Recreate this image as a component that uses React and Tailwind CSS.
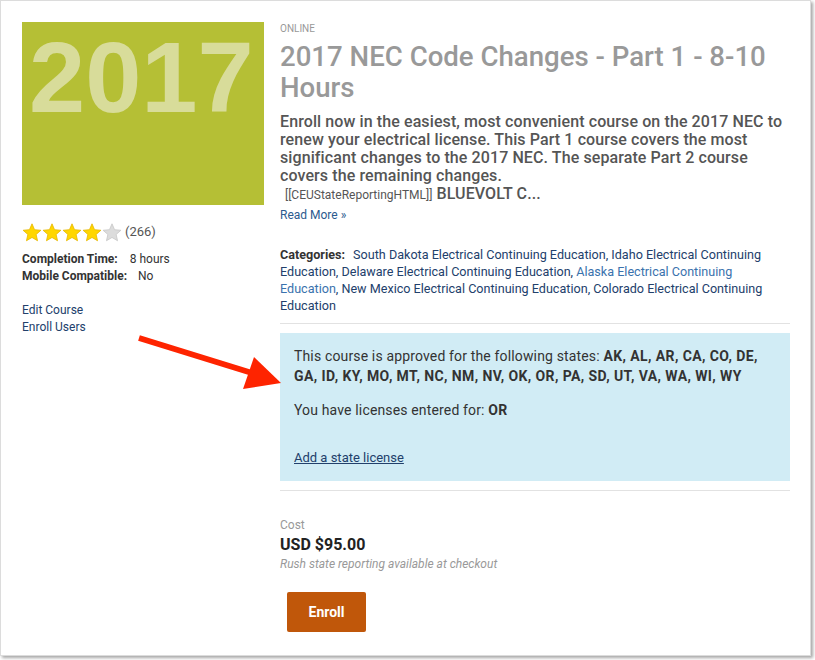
import React from "react";

function Star({ filled }) {
  return (
    <svg width="20" height="19" viewBox="0 0 24 23">
      <polygon
        points="12,1 15.1,8.1 22.8,8.8 17,13.9 18.7,21.5 12,17.5 5.3,21.5 7,13.9 1.2,8.8 8.9,8.1"
        fill={filled ? "#ffd600" : "#dcdcdc"}
        stroke={filled ? "#e8b900" : "#c8c8c8"}
        strokeWidth="1"
        strokeLinejoin="round"
      />
    </svg>
  );
}

export default function App() {
  return (
    <div className="relative w-[815px] h-[660px] bg-white" style={{ fontFamily: "Roboto, 'Liberation Sans', sans-serif" }}>
      <div className="w-[811px] h-[656px] bg-white border border-[#dcdcdc] shadow-[2px_2px_3px_rgba(0,0,0,0.35)] flex pl-[21px] pt-[21px] gap-4">
        {/* Left column */}
        <div className="w-[242px] flex flex-col">
          <div className="w-[242px] h-[183px] bg-[#b5bf35] pl-[7px] pt-[5px] overflow-hidden">
            <div className="text-[101px] leading-none font-bold text-[#d8dc9a]" style={{ fontFamily: "'Liberation Sans', Arial, sans-serif" }}>2017</div>
          </div>
          <div className="flex items-center mt-[17px] h-[20px]">
            <Star filled />
            <Star filled />
            <Star filled />
            <Star filled />
            <Star />
            <span className="ml-[3px] text-[13px] text-[#555]">(266)</span>
          </div>
          <div className="mt-[9px] text-[12px] leading-[17px] text-[#333]">
            <div><span className="font-bold">Completion Time:</span><span className="ml-[12px]">8 hours</span></div>
            <div><span className="font-bold">Mobile Compatible:</span><span className="ml-[11px]">No</span></div>
          </div>
          <div className="mt-[17px] text-[12px] leading-[17px] text-[#22406b]">
            <div>Edit Course</div>
            <div>Enroll Users</div>
          </div>
        </div>

        {/* Right column */}
        <div className="w-[510px] flex flex-col">
          <div className="text-[10px] leading-[14px] text-[#999] uppercase">Online</div>
          <h1 className="mt-[5px] text-[27.6px] leading-[31px] font-medium text-[#999]">2017 NEC Code Changes - Part 1 - 8-10 Hours</h1>
          <div className="mt-[10px] text-[16px] leading-[18px] font-medium text-[#555] tracking-[0.1px]">
            Enroll now in the easiest, most convenient course on the 2017 NEC to renew your electrical license. This Part 1 course covers the most significant changes to the 2017 NEC. The separate Part 2 course covers the remaining changes.
            <br />
            <span className="text-[12px] font-normal pl-[5px] tracking-normal">[[CEUStateReportingHTML]]</span> BLUEVOLT C...
          </div>
          <div className="mt-[3px] text-[12px] leading-[17px] text-[#2b5a8e]">Read More »</div>

          <div className="mt-[22px] text-[12.6px] leading-[17px] text-[#22406b]">
            <span className="font-bold text-[#333]">Categories:</span>
            <span className="ml-[8px]">South Dakota Electrical Continuing Education, Idaho Electrical Continuing Education, Delaware Electrical Continuing Education, </span>
            <span className="text-[#3a72ad]">Alaska Electrical Continuing Education</span>
            <span>, New Mexico Electrical Continuing Education, Colorado Electrical Continuing Education</span>
          </div>
          <div className="mt-[9px] h-px bg-[#e2e2e2]" />

          <div className="mt-[9px] bg-[#d1ecf5] px-[14px] pt-[13px] pb-[13px] text-[14px] leading-[20px] text-[#333]">
            <p className="tracking-[0.15px]">
              This course is approved for the following states: <span className="font-bold tracking-[0.4px]">AK, AL, AR, CA, CO, DE, GA, ID, KY, MO, MT, NC, NM, NV, OK, OR, PA, SD, UT, VA, WA, WI, WY</span>
            </p>
            <p className="mt-[14px] tracking-[0.15px]">
              You have licenses entered for: <span className="font-bold tracking-[0.4px]">OR</span>
            </p>
            <p className="mt-[28px] text-[13px]">
              <span className="underline text-[#22406b]">Add a state license</span>
            </p>
          </div>
          <div className="mt-[9px] h-px bg-[#e2e2e2]" />

          <div className="mt-[26px] text-[12px] leading-[16px] text-[#999]">Cost</div>
          <div className="mt-[2px] text-[16px] leading-[20px] font-bold text-[#222]">USD $95.00</div>
          <div className="text-[12px] leading-[18px] italic text-[#999]">Rush state reporting available at checkout</div>
          <div className="mt-[19px] ml-[7px]">
            <button className="w-[79px] h-[40px] bg-[#c0570a] rounded-[2px] text-white text-[14px] font-bold">Enroll</button>
          </div>
        </div>
      </div>

      {/* Red annotation arrow */}
      <svg className="absolute left-0 top-0 pointer-events-none" width="815" height="660">
        <line x1="139" y1="338" x2="252" y2="373" stroke="#fe2400" strokeWidth="6" />
        <polygon points="254,357 243,389 281,383" fill="#fe2400" />
      </svg>
    </div>
  );
}
